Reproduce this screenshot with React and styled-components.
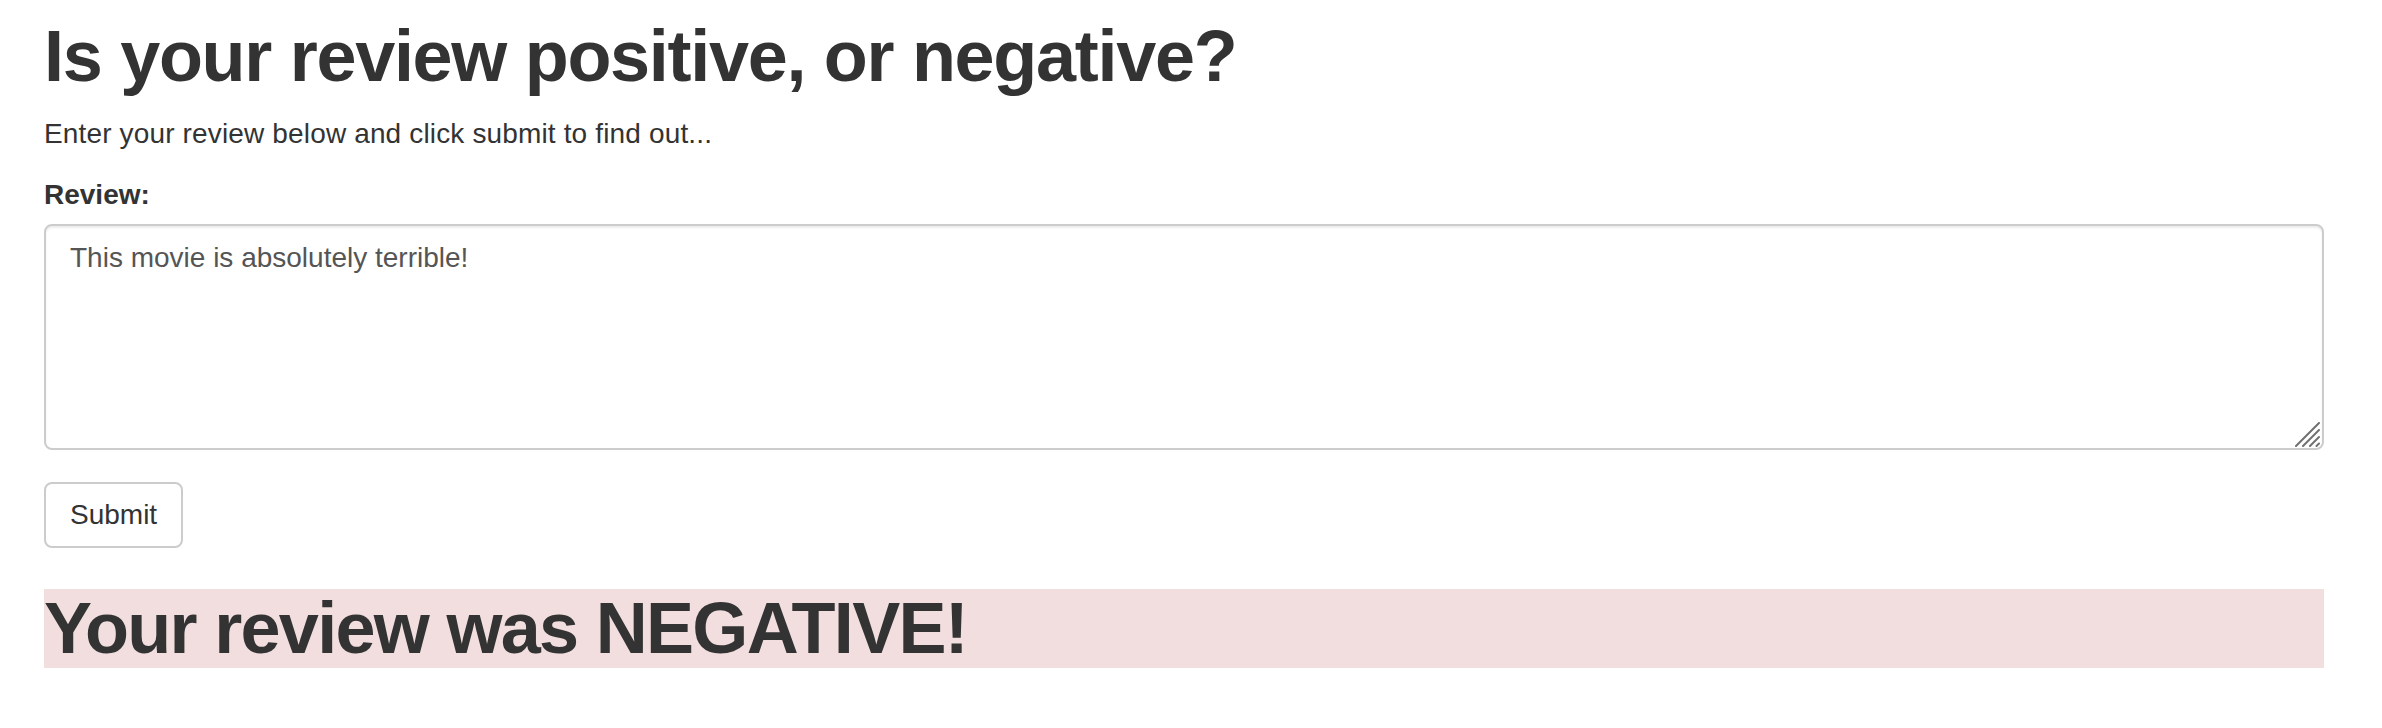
import React from "react";
import styled, { createGlobalStyle } from "styled-components";

const GlobalStyle = createGlobalStyle`
  html, body {
    margin: 0;
    padding: 0;
    background: #ffffff;
  }
  body {
    font-family: "Liberation Sans", Arial, Helvetica, sans-serif;
    font-size: 28px;
    line-height: 40px;
    color: #333333;
  }
  * { box-sizing: border-box; }
`;

const Container = styled.div`
  width: 2280px;
  margin-left: 44px;
  display: flex;
  flex-direction: column;
  align-items: flex-start;
`;

const Heading = styled.h1`
  margin: ${(p) => p.$top}px 0 ${(p) => p.$bottom}px;
  font-size: 72px;
  line-height: 79px;
  font-weight: 700;
  letter-spacing: ${(p) => p.$spacing}px;
  color: #333333;
  align-self: stretch;
  background: ${(p) => p.$bg || "transparent"};
`;

const Lead = styled.p`
  margin: 0 0 20px;
  font-size: 28px;
  line-height: 40px;
  letter-spacing: 0.15px;
`;

const FormGroup = styled.div`
  display: flex;
  flex-direction: column;
  align-items: flex-start;
  align-self: stretch;
  margin-bottom: 32px;
`;

const Label = styled.label`
  font-weight: 700;
  font-size: 28px;
  line-height: 40px;
  margin-top: 1px;
  margin-bottom: 9px;
`;

const FieldWrap = styled.div`
  position: relative;
  align-self: stretch;
`;

const TextArea = styled.textarea`
  display: block;
  width: 100%;
  height: 226px;
  padding: 12px 24px;
  border: 2px solid #cccccc;
  border-radius: 8px;
  box-shadow: inset 0 2px 2px rgba(0, 0, 0, 0.075);
  font-family: "Liberation Sans", Arial, Helvetica, sans-serif;
  font-size: 28px;
  line-height: 40px;
  color: #555555;
  background: #ffffff;
  resize: none;
  outline: none;
`;

const Grip = styled.svg`
  position: absolute;
  right: 4px;
  bottom: 3px;
  width: 25px;
  height: 25px;
  pointer-events: none;
`;

const Button = styled.button`
  font-family: "Liberation Sans", Arial, Helvetica, sans-serif;
  font-size: 28px;
  line-height: 40px;
  color: #333333;
  background: #ffffff;
  border: 2px solid #cccccc;
  border-radius: 8px;
  padding: 11px 24px;
  cursor: pointer;
`;

export default function App() {
  return (
    <>
      <GlobalStyle />
      <Container>
        <Heading $top={17} $bottom={18} $spacing={-1.3}>
          Is your review positive, or negative?
        </Heading>
        <Lead>Enter your review below and click submit to find out...</Lead>
        <FormGroup>
          <Label htmlFor="review">Review:</Label>
          <FieldWrap>
            <TextArea
              id="review"
              defaultValue="This movie is absolutely terrible!"
            />
            <Grip viewBox="0 0 25 25">
              <g stroke="#707070" strokeWidth="2" strokeLinecap="round">
                <line x1="24" y1="1" x2="1" y2="24" />
                <line x1="24" y1="8" x2="8" y2="24" />
                <line x1="24" y1="15" x2="15" y2="24" />
                <line x1="24" y1="21.5" x2="21.5" y2="24" />
              </g>
            </Grip>
          </FieldWrap>
        </FormGroup>
        <Button type="button">Submit</Button>
        <Heading $top={41} $bottom={20} $bg="#f2dede" $spacing={-1.7}>
          Your review was NEGATIVE!
        </Heading>
      </Container>
    </>
  );
}
